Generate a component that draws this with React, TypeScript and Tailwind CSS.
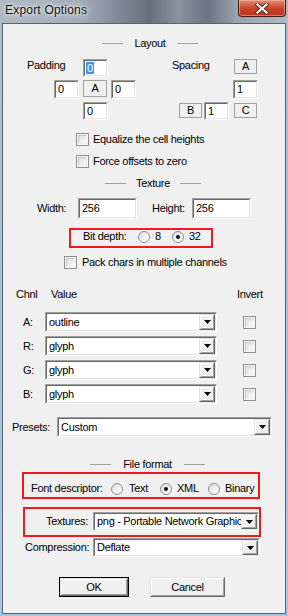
import React from 'react';

type Props = { className?: string; children?: React.ReactNode };

// classic 3D sunken edit border
function Sunken({ className = '', children }: Props) {
  return (
    <div className={`shrink-0 border border-t-[#a0a0a0] border-l-[#a0a0a0] border-r-white border-b-white ${className}`}>
      <div className="flex h-full w-full items-center overflow-hidden border border-t-[#696969] border-l-[#696969] border-r-[#e3e3e3] border-b-[#e3e3e3] bg-white">
        {children}
      </div>
    </div>
  );
}

function Raised({ className = '', children }: Props) {
  return (
    <div className={`shrink-0 border border-t-[#e3e3e3] border-l-[#e3e3e3] border-r-[#696969] border-b-[#696969] ${className}`}>
      <div className="flex h-full w-full items-center justify-center border border-t-white border-l-white border-r-[#a0a0a0] border-b-[#a0a0a0] bg-[#f0f0f0]">
        {children}
      </div>
    </div>
  );
}

function Edit({ value, className = '', selected }: { value: string; className?: string; selected?: boolean }) {
  return (
    <Sunken className={className}>
      {selected ? (
        <span className="ml-[1px] bg-[#3399ff] px-[1px] leading-[12px] text-white">{value}</span>
      ) : (
        <span className="pl-[2px]">{value}</span>
      )}
    </Sunken>
  );
}

function Select({ value, className = '' }: { value: string; className?: string }) {
  return (
    <Sunken className={className}>
      <span className="min-w-0 flex-1 overflow-hidden whitespace-nowrap pl-[2px]">{value}</span>
      <Raised className="h-full w-[16px]">
        <svg width="7" height="4" viewBox="0 0 7 4">
          <path d="M0 0H7L3.5 4Z" fill="#000" />
        </svg>
      </Raised>
    </Sunken>
  );
}

function LabelBox({ className = '', children }: Props) {
  return (
    <div className={`flex shrink-0 items-center justify-center border border-[#a0a0a0] bg-[#f0f0f0] ${className}`}>
      {children}
    </div>
  );
}

function Check({ className = '' }: { className?: string }) {
  return (
    <div className={`h-[13px] w-[13px] shrink-0 border border-[#8e8f8f] bg-[#f7f7f7] p-[1px] ${className}`}>
      <div className="h-full w-full border border-t-[#c6c6c6] border-l-[#c6c6c6] border-r-[#eeeeee] border-b-[#eeeeee] bg-linear-to-br from-[#dedede] to-[#fbfbfb]" />
    </div>
  );
}

function Radio({ on }: { on?: boolean }) {
  return (
    <div className="flex h-[12px] w-[12px] shrink-0 items-center justify-center rounded-full border border-[#8e8f8f] bg-linear-to-br from-[#d6d6d6] via-[#f2f2f2] to-white">
      {on && <div className="h-[4px] w-[4px] rounded-full bg-[#111]" />}
    </div>
  );
}

function Header({ label, gap, className = '' }: { label: string; gap: string; className?: string }) {
  return (
    <div className={`flex h-[13px] items-center ${className}`}>
      <div className="h-px w-[21px] bg-[#a0a0a0]" />
      <span className={`text-center ${gap}`}>{label}</span>
      <div className="h-px w-[21px] bg-[#a0a0a0]" />
    </div>
  );
}

const channels = [
  { ch: 'A:', value: 'outline' },
  { ch: 'R:', value: 'glyph' },
  { ch: 'G:', value: 'glyph' },
  { ch: 'B:', value: 'glyph' },
];

export default function App() {
  return (
    <div className="flex h-[616px] w-[288px] flex-col overflow-hidden bg-linear-to-b from-[#b3bdc7] to-[#a8c7e7] text-[11px] leading-[13px] tracking-[-0.3px] text-black [font-family:'Liberation_Sans',Arial,sans-serif]">
      {/* title bar */}
      <div className="flex h-[23px] shrink-0 items-start bg-[linear-gradient(90deg,#aeb8c2_0%,#a4aeb9_28%,#838d99_40%,#66707b_52%,#8a949f_62%,#6a7480_72%,#98a2ad_82%,#b0bac4_100%)]">
        <span className="ml-[5px] mt-[3px] text-[12px] leading-[15px] tracking-[0.2px] text-[#111] [text-shadow:0_0_6px_#fff,0_0_3px_#fff]">
          Export Options
        </span>
        <div className="ml-auto mr-[2px] flex h-[17px] w-[48px] items-center justify-center rounded-b-[4px] border border-t-0 border-[#4a1a10] bg-linear-to-b from-[#e0907a] via-[#c9452c] to-[#b8321a] shadow-[inset_0_0_0_1px_rgba(255,200,180,0.5)]">
          <svg width="14" height="11" viewBox="0 0 14 11">
            <path d="M2.5 1.5L11.5 9.5M11.5 1.5L2.5 9.5" stroke="#5a2418" strokeWidth="4" strokeLinecap="square" />
            <path d="M2.5 1.5L11.5 9.5M11.5 1.5L2.5 9.5" stroke="#fff" strokeWidth="2.2" strokeLinecap="square" />
          </svg>
        </div>
      </div>

      {/* client area */}
      <div className="mx-[2px] flex h-[591px] shrink-0 flex-col border border-[#56636f] bg-[#f0f0f0]">
        <Header label="Layout" gap="w-[54px]" className="ml-[99px] mt-[13px]" />

        {/* padding / spacing */}
        <div className="mt-[9px] flex h-[18px] items-start">
          <span className="ml-[24px] w-[56px]">Padding</span>
          <Edit value="0" selected className="h-[18px] w-[25px]" />
          <span className="ml-[64px] w-[62px]">Spacing</span>
          <LabelBox className="h-[15px] w-[23px]">A</LabelBox>
        </div>
        <div className="mt-[3px] flex h-[19px] items-start">
          <Edit value="0" className="ml-[51px] h-[19px] w-[25px]" />
          <LabelBox className="ml-[4px] h-[17px] w-[24px]">A</LabelBox>
          <Edit value="0" className="ml-[4px] h-[19px] w-[25px]" />
          <Edit value="1" className="ml-[97px] h-[19px] w-[25px]" />
        </div>
        <div className="mt-[3px] flex h-[18px] items-start">
          <Edit value="0" className="ml-[80px] h-[18px] w-[25px]" />
          <LabelBox className="ml-[71px] mt-[1px] h-[15px] w-[23px]">B</LabelBox>
          <Edit value="1" className="ml-[2px] h-[18px] w-[25px]" />
          <LabelBox className="ml-[5px] mt-[1px] h-[15px] w-[23px]">C</LabelBox>
        </div>

        <div className="mt-[13px] flex h-[13px] items-center">
          <Check className="ml-[73px]" />
          <span className="ml-[4px]">Equalize the cell heights</span>
        </div>
        <div className="mt-[9px] flex h-[13px] items-center">
          <Check className="ml-[73px]" />
          <span className="ml-[4px]">Force offsets to zero</span>
        </div>

        <Header label="Texture" gap="w-[54px]" className="ml-[102px] mt-[9px]" />

        <div className="mt-[8px] flex h-[21px] items-center">
          <span className="ml-[34px] w-[41px]">Width:</span>
          <Edit value="256" className="h-[21px] w-[59px]" />
          <span className="ml-[15px] w-[40px]">Height:</span>
          <Edit value="256" className="h-[21px] w-[59px]" />
        </div>

        <div className="ml-[66px] mt-[9px] h-[20px] w-[144px] border-2 border-[#f01a1a]">
          <div className="flex h-[13px] items-center">
            <span className="ml-[12px] w-[55px]">Bit depth:</span>
            <Radio />
            <span className="ml-[5px] w-[17px]">8</span>
            <Radio on />
            <span className="ml-[5px]">32</span>
          </div>
        </div>

        <div className="mt-[8px] flex h-[13px] items-center">
          <Check className="ml-[61px]" />
          <span className="ml-[5px]">Pack chars in multiple channels</span>
        </div>

        <div className="mt-[19px] flex h-[13px] items-center">
          <span className="ml-[13px] w-[35px]">Chnl</span>
          <span className="w-[186px]">Value</span>
          <span>Invert</span>
        </div>

        {channels.map((c, i) => (
          <div key={c.ch} className={`flex h-[20px] items-center ${i === 0 ? 'mt-[11px]' : 'mt-[4px]'}`}>
            <span className="ml-[20px] w-[22px]">{c.ch}</span>
            <Select value={c.value} className="h-[20px] w-[172px]" />
            <Check className="ml-[26px]" />
          </div>
        ))}

        <div className="mt-[13px] flex h-[20px] items-center">
          <span className="ml-[9px] w-[45px]">Presets:</span>
          <Select value="Custom" className="h-[20px] w-[215px]" />
        </div>

        <Header label="File format" gap="w-[73px]" className="ml-[87px] mt-[21px]" />

        <div className="ml-[19px] mt-[1px] h-[27px] w-[238px] border-2 border-[#f01a1a] pt-[6px]">
          <div className="flex h-[17px] items-center">
            <span className="ml-[7px] w-[80px]">Font descriptor:</span>
            <Radio />
            <span className="ml-[6px] w-[31px]">Text</span>
            <Radio on />
            <span className="ml-[5px] w-[31px]">XML</span>
            <Radio />
            <span className="ml-[5px]">Binary</span>
          </div>
        </div>

        <div className="ml-[20px] mt-[8px] flex h-[30px] w-[238px] items-start border-2 border-[#f01a1a] pt-[3px]">
          <span className="flex h-[19px] w-[68px] items-center justify-end pr-[5px]">Textures:</span>
          <Select value="png - Portable Network Graphic" className="h-[19px] w-[166px]" />
        </div>

        <div className="mt-[1px] flex h-[19px] items-center">
          <span className="ml-[22px] w-[68px]">Compression:</span>
          <Select value="Deflate" className="h-[19px] w-[167px]" />
        </div>

        <div className="mt-[20px] flex h-[20px] items-center">
          <div className="ml-[56px] h-[20px] w-[70px] border border-black">
            <Raised className="h-full w-full">OK</Raised>
          </div>
          <Raised className="ml-[21px] h-[20px] w-[75px]">Cancel</Raised>
        </div>
      </div>
    </div>
  );
}
